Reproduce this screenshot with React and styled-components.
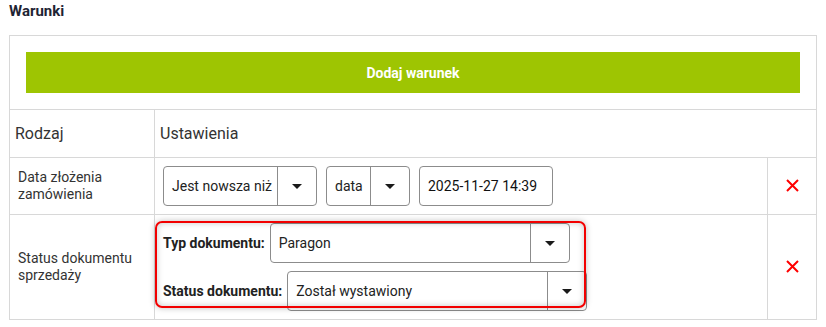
import React from 'react'
import styled, { createGlobalStyle } from 'styled-components'

const GlobalStyle = createGlobalStyle`
  body {
    margin: 0;
    background: #fff;
    font-family: Roboto, "Liberation Sans", Arial, sans-serif;
    color: #333;
  }
`

const Page = styled.div`
  padding: 0 11px 0 9px;
`

const Title = styled.h3`
  margin: 0;
  height: 35px;
  padding-top: 2px;
  box-sizing: border-box;
  font-size: 15px;
  font-weight: bold;
  color: #1e2433;
`

const Table = styled.table`
  width: 807px;
  border-collapse: collapse;
  table-layout: fixed;
  td {
    border: 1px solid #d8d8d8;
    vertical-align: middle;
  }
`

const AddCell = styled.td`
  padding: 16px;
`

const AddButton = styled.button`
  display: block;
  width: 100%;
  height: 41px;
  border: none;
  background: #9ec502;
  color: #fff;
  font-family: Roboto, "Liberation Sans", Arial, sans-serif;
  font-weight: bold;
  font-size: 14px;
  cursor: pointer;
`

const HeadCell = styled.td`
  height: 47px;
  padding: 0 5px;
  font-size: 16px;
  color: #333;
`

const TypeCell = styled.td`
  padding: 0 8px;
  font-size: 14px;
  line-height: 17px;
  color: #333;
`

const SettingsCell = styled.td`
  padding: 8px;
`

const DeleteCell = styled.td`
  text-align: center;
`

const Inline = styled.div`
  display: flex;
  gap: 9px;
`

const SelectBox = styled.div`
  display: flex;
  width: ${p => p.$w}px;
  height: ${p => p.$h || 40}px;
  box-sizing: border-box;
  border: 1px solid #8c8c8c;
  border-radius: 4px;
  background: #fff;
  font-size: 14px;
  color: #222;
`

const SelectValue = styled.div`
  flex: 1;
  display: flex;
  align-items: center;
  padding-left: 8px;
  white-space: nowrap;
  overflow: hidden;
`

const SelectArrow = styled.div`
  width: 38px;
  border-left: 1px solid #8c8c8c;
  display: flex;
  align-items: center;
  justify-content: center;
  &::after {
    content: '';
    border-left: 5px solid transparent;
    border-right: 5px solid transparent;
    border-top: 5px solid #1a1a1a;
  }
`

const TextInput = styled.div`
  width: 134px;
  height: 40px;
  box-sizing: border-box;
  border: 1px solid #8c8c8c;
  border-radius: 4px;
  display: flex;
  align-items: center;
  padding-left: 8px;
  font-size: 14px;
  color: #111;
`

const Highlighted = styled.div`
  position: relative;
  display: flex;
  flex-direction: column;
  gap: 8px;
  &::after {
    content: '';
    position: absolute;
    left: -8px;
    top: -2px;
    width: 431px;
    height: 87px;
    box-sizing: border-box;
    border: 2px solid #f20000;
    border-radius: 7px;
    box-shadow: 0 0 6px rgba(0, 0, 0, 0.25), inset 0 0 6px rgba(0, 0, 0, 0.22);
    pointer-events: none;
  }
`

const Field = styled.div`
  display: flex;
  align-items: center;
  gap: 5px;
`

const FieldLabel = styled.span`
  font-size: 14px;
  font-weight: bold;
  color: #222;
`

function Select({ value, width, height }) {
  return (
    <SelectBox $w={width} $h={height}>
      <SelectValue>{value}</SelectValue>
      <SelectArrow />
    </SelectBox>
  )
}

function RemoveIcon() {
  return (
    <svg width="13" height="13" viewBox="0 0 13 13">
      <path d="M1 1 L12 12 M12 1 L1 12" stroke="#f00" strokeWidth="2" />
    </svg>
  )
}

export default function App() {
  return (
    <Page>
      <GlobalStyle />
      <Title>Warunki</Title>
      <Table>
        <colgroup>
          <col style={{ width: 145 }} />
          <col style={{ width: 613 }} />
          <col style={{ width: 49 }} />
        </colgroup>
        <tbody>
          <tr>
            <AddCell colSpan={3}>
              <AddButton>Dodaj warunek</AddButton>
            </AddCell>
          </tr>
          <tr>
            <HeadCell>Rodzaj</HeadCell>
            <HeadCell colSpan={2}>Ustawienia</HeadCell>
          </tr>
          <tr>
            <TypeCell>Data złożenia zamówienia</TypeCell>
            <SettingsCell>
              <Inline>
                <Select value="Jest nowsza niż" width={154} />
                <Select value="data" width={84} />
                <TextInput>2025-11-27 14:39</TextInput>
              </Inline>
            </SettingsCell>
            <DeleteCell><RemoveIcon /></DeleteCell>
          </tr>
          <tr>
            <TypeCell>Status dokumentu sprzedaży</TypeCell>
            <SettingsCell>
              <Highlighted>
                <Field>
                  <FieldLabel>Typ dokumentu:</FieldLabel>
                  <Select value="Paragon" width={300} height={40} />
                </Field>
                <Field>
                  <FieldLabel>Status dokumentu:</FieldLabel>
                  <Select value="Został wystawiony" width={300} height={40} />
                </Field>
              </Highlighted>
            </SettingsCell>
            <DeleteCell><RemoveIcon /></DeleteCell>
          </tr>
        </tbody>
      </Table>
    </Page>
  )
}
